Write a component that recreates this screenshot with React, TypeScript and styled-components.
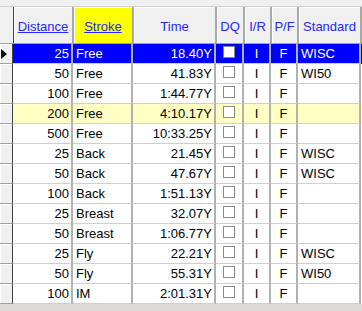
import React from 'react';
import styled, { createGlobalStyle } from 'styled-components';

const Global = createGlobalStyle`
  html, body { margin: 0; padding: 0; background: #dcdad5; }
  body {
    width: 362px; height: 311px; overflow: hidden;
    font-family: "Liberation Sans", Arial, sans-serif;
    font-size: 13px;
  }
`;

type Col = { key: string; title: string; width: number; align: 'left' | 'right' | 'center'; link?: boolean; hilite?: boolean };

const cols: Col[] = [
  { key: 'dist', title: 'Distance', width: 60, align: 'right', link: true },
  { key: 'stroke', title: 'Stroke', width: 60, align: 'left', link: true, hilite: true },
  { key: 'time', title: 'Time', width: 83, align: 'right' },
  { key: 'dq', title: 'DQ', width: 28, align: 'center' },
  { key: 'ir', title: 'I/R', width: 27, align: 'center' },
  { key: 'pf', title: 'P/F', width: 27, align: 'center' },
  { key: 'std', title: 'Standard', width: 63, align: 'left' },
];

const rows = [
  ['25', 'Free', '18.40Y', 'WISC'],
  ['50', 'Free', '41.83Y', 'WI50'],
  ['100', 'Free', '1:44.77Y', ''],
  ['200', 'Free', '4:10.17Y', ''],
  ['500', 'Free', '10:33.25Y', ''],
  ['25', 'Back', '21.45Y', 'WISC'],
  ['50', 'Back', '47.67Y', 'WISC'],
  ['100', 'Back', '1:51.13Y', ''],
  ['25', 'Breast', '32.07Y', ''],
  ['50', 'Breast', '1:06.77Y', ''],
  ['25', 'Fly', '22.21Y', 'WISC'],
  ['50', 'Fly', '55.31Y', 'WI50'],
  ['100', 'IM', '2:01.31Y', ''],
];

const Grid = styled.div`
  width: 362px;
  padding-top: 6px;
  background: #f0f0f0;
  border-bottom: 6px solid #dcdad5;
`;

const HeaderRow = styled.div`
  display: flex;
  height: 38px;
  border-top: 1px solid #d0d0d0;
  border-bottom: 1px solid #a0a0a0;
  box-sizing: border-box;
`;

const Corner = styled.div`
  width: 13px;
  flex: none;
  background: #f0f0f0;
  border-right: 1px solid #404040;
`;

const HeadCell = styled.div<{ $w: number; $hilite?: boolean; $link?: boolean }>`
  width: ${p => p.$w}px;
  flex: none;
  box-sizing: border-box;
  display: flex;
  align-items: center;
  justify-content: center;
  background: ${p => (p.$hilite ? '#ffff00' : '#f0f0f0')};
  border-right: 2px solid #a8a8a8;
  box-shadow: inset 1px 1px 0 #ffffff;
  color: #2626ff;
  text-decoration: ${p => (p.$link ? 'underline' : 'none')};
  padding-top: 2px;
`;

const Row = styled.div<{ $bg: string; $fg: string }>`
  display: flex;
  height: 20px;
  box-sizing: border-box;
  background: ${p => p.$bg};
  color: ${p => p.$fg};
`;

const Indicator = styled.div`
  width: 13px;
  flex: none;
  box-sizing: border-box;
  background: #f0f0f0;
  border-right: 1px solid #404040;
  border-bottom: 1px solid #a0a0a0;
  box-shadow: inset 1px 1px 0 #ffffff;
  display: flex;
  align-items: center;
  padding-left: 1px;
`;

const Cell = styled.div<{ $w: number; $align: 'left' | 'right' | 'center' }>`
  width: ${p => p.$w}px;
  flex: none;
  box-sizing: border-box;
  border-right: 2px solid #b0b0b0;
  border-bottom: 1px solid #cfcfcf;
  display: flex;
  align-items: center;
  justify-content: ${p => (p.$align === 'left' ? 'flex-start' : p.$align === 'right' ? 'flex-end' : 'center')};
  padding: 0 ${p => (p.$align === 'right' ? 2 : 3)}px;
  white-space: nowrap;
  overflow: hidden;
`;

const Check = styled.span`
  width: 12px;
  height: 12px;
  box-sizing: border-box;
  border: 1px solid #8a8a8a;
  background: #ffffff;
  align-self: flex-start;
  margin-top: 2px;
`;

const Triangle = styled.span`
  width: 0;
  height: 0;
  border-top: 5px solid transparent;
  border-bottom: 5px solid transparent;
  border-left: 6px solid #000;
`;

export default function App() {
  return (
    <>
      <Global />
      <Grid>
        <HeaderRow>
          <Corner />
          {cols.map(c => (
            <HeadCell key={c.key} $w={c.width} $hilite={c.hilite} $link={c.link}>
              {c.title}
            </HeadCell>
          ))}
        </HeaderRow>
        {rows.map((r, i) => {
          const selected = i === 0;
          const bg = selected ? '#0000ff' : i === 3 ? '#ffffc4' : '#ffffff';
          const fg = selected ? '#ffffff' : '#000000';
          const vals = [r[0], r[1], r[2], null, 'I', 'F', r[3]];
          return (
            <Row key={i} $bg={bg} $fg={fg}>
              <Indicator>{selected && <Triangle />}</Indicator>
              {cols.map((c, j) => (
                <Cell key={c.key} $w={c.width} $align={c.align}>
                  {j === 3 ? <Check /> : vals[j]}
                </Cell>
              ))}
            </Row>
          );
        })}
      </Grid>
    </>
  );
}
